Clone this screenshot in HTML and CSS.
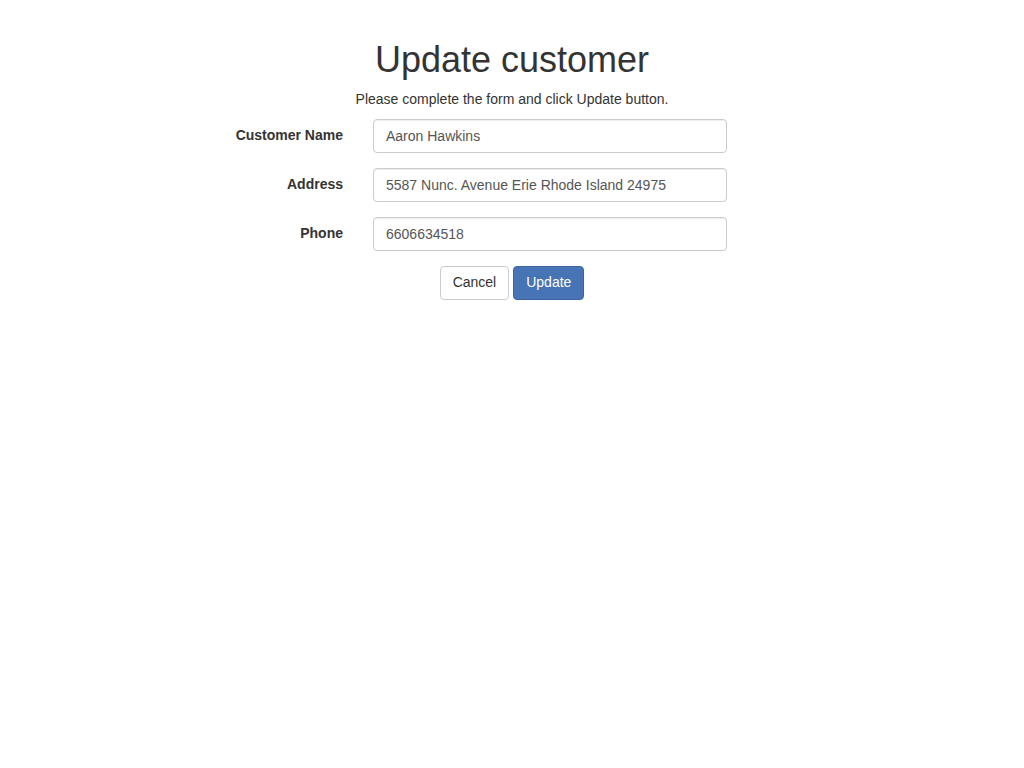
FILE: index.html
```html
<!DOCTYPE html>
<html>
<head>
<meta charset="utf-8">
<link rel="stylesheet" href="styles.css">
</head>
<body>
<div class="page">
  <h1 class="title">Update customer</h1>
  <p class="lead">Please complete the form and click Update button.</p>
  <form class="form">
    <div class="row">
      <label class="label">Customer Name</label>
      <input class="input" type="text" value="Aaron Hawkins">
    </div>
    <div class="row">
      <label class="label">Address</label>
      <input class="input" type="text" value="5587 Nunc. Avenue Erie Rhode Island 24975">
    </div>
    <div class="row">
      <label class="label">Phone</label>
      <input class="input" type="text" value="6606634518">
    </div>
  </form>
  <div class="actions">
    <button class="btn btn-default" type="button">Cancel</button>
    <button class="btn btn-primary" type="button">Update</button>
  </div>
</div>
</body>
</html>
```

FILE: styles.css
```css
html, body {
  margin: 0;
  padding: 0;
  background: #fff;
}
body {
  font-family: "Liberation Sans", Arial, sans-serif;
  font-size: 14px;
  line-height: 1.42857;
  color: #333;
}
.page {
  padding-top: 40px;
}
.title {
  margin: 0 0 10px;
  font-size: 36px;
  font-weight: 500;
  line-height: 1.1;
  text-align: center;
  color: #333;
}
.lead {
  margin: 0 0 9px;
  text-align: center;
}
.form {
  width: 544px;
  margin-left: calc(50% - 329px);
}
.row {
  display: grid;
  grid-template-columns: 160px 354px;
  column-gap: 30px;
  align-items: center;
  margin-bottom: 15px;
}
.label {
  text-align: right;
  font-weight: bold;
  color: #333;
}
.input {
  box-sizing: border-box;
  width: 354px;
  height: 34px;
  padding: 6px 12px;
  font-family: inherit;
  font-size: 14px;
  color: #555;
  background: #fff;
  border: 1px solid #ccc;
  border-radius: 4px;
  box-shadow: inset 0 1px 1px rgba(0,0,0,0.075);
  outline: none;
}
.actions {
  display: flex;
  justify-content: center;
  gap: 4px;
}
.btn {
  box-sizing: border-box;
  height: 34px;
  padding: 6px 12px;
  font-family: inherit;
  font-size: 14px;
  line-height: 1.42857;
  border-radius: 4px;
  border: 1px solid transparent;
  cursor: pointer;
}
.btn-default {
  color: #333;
  background: #fff;
  border-color: #ccc;
}
.btn-primary {
  color: #fff;
  background: #4674b4;
  border-color: #3b66a3;
}
```
